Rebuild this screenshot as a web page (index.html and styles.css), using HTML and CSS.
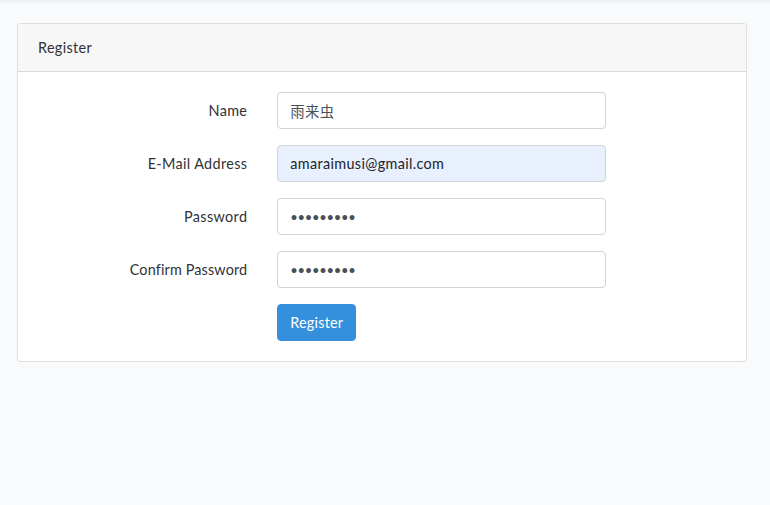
FILE: index.html
```
<!DOCTYPE html>
<html lang="en">
<head>
<meta charset="utf-8">
<title>Register</title>
<link rel="stylesheet" href="styles.css">
</head>
<body>
<div class="topshade"></div>
<main class="page">
  <div class="card">
    <div class="card-header">Register</div>
    <div class="card-body">
      <form class="form">
        <div class="row">
          <label class="label" for="name">Name</label>
          <div class="field"><input id="name" class="input" type="text" value="雨来虫"></div>
        </div>
        <div class="row">
          <label class="label" for="email">E-Mail Address</label>
          <div class="field"><input id="email" class="input autofill" type="text" value="amaraimusi@gmail.com"></div>
        </div>
        <div class="row">
          <label class="label" for="password">Password</label>
          <div class="field"><input id="password" class="input secret" type="password" value="123456789"></div>
        </div>
        <div class="row">
          <label class="label tight" for="confirm">Confirm Password</label>
          <div class="field"><input id="confirm" class="input secret" type="password" value="123456789"></div>
        </div>
        <div class="row last">
          <span class="label"></span>
          <div class="field"><button type="button" class="btn">Register</button></div>
        </div>
      </form>
    </div>
  </div>
</main>
</body>
</html>
```
FILE: styles.css
```
* { box-sizing: border-box; }
html, body { margin: 0; padding: 0; }
body {
  background: #f8fafc;
  font-family: "Lato", "Noto Sans CJK JP", sans-serif;
  font-size: 14.4px;
  line-height: 1.6;
  letter-spacing: 0.35px;
  color: #2f3337;
  position: relative;
}
.topshade {
  position: absolute;
  left: 0; right: 0; top: 0;
  height: 4px;
  background: linear-gradient(to bottom, rgba(0,0,0,0.06), rgba(0,0,0,0));
}
.page {
  padding: 23px 0 0 17px;
}
.card {
  width: 730px;
  background: #fff;
  border: 1px solid rgba(0,0,0,0.125);
  border-radius: 4px;
}
.card-header {
  padding: 12px 20px;
  background: #f7f7f7;
  border-bottom: 1px solid rgba(0,0,0,0.125);
  border-radius: 3px 3px 0 0;
}
.card-body {
  padding: 20px 5px;
}
.row {
  display: flex;
  align-items: center;
  margin-bottom: 16px;
}
.row.last { margin-bottom: 0; }
.label {
  width: 239.33px;
  padding: 0 15px;
  text-align: right;
}
.label.tight { letter-spacing: 0.15px; }
.field {
  width: 359px;
  padding: 0 15px;
}
.input {
  display: block;
  width: 100%;
  height: 37px;
  padding: 6px 12px;
  font-family: "Lato", "Noto Sans CJK JP", sans-serif;
  font-size: 14.4px;
  line-height: 1.6;
  letter-spacing: 0.35px;
  color: #495057;
  background: #fff;
  border: 1px solid #ced4da;
  border-radius: 4px;
  outline: none;
}
.input.secret {
  font-size: 13px;
  letter-spacing: -0.3px;
}
.input.autofill {
  background: #e8f0fe;
  color: #212529;
}
.btn {
  height: 37px;
  padding: 6px 12px;
  font-family: "Lato", sans-serif;
  font-size: 14.4px;
  line-height: 1.6;
  letter-spacing: 0.2px;
  color: #fff;
  background: #3490dc;
  border: 1px solid #3490dc;
  border-radius: 4px;
}
```
